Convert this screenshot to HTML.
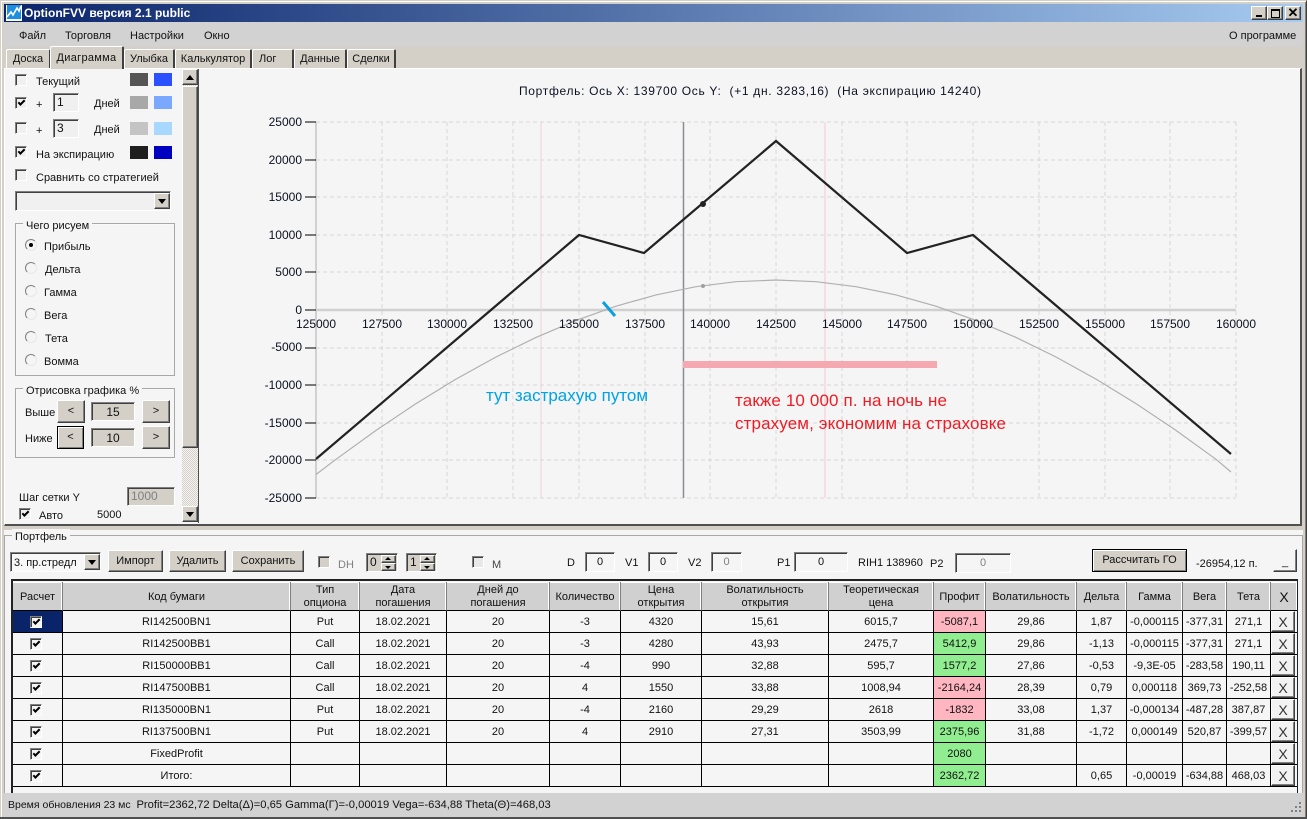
<!DOCTYPE html>
<html><head><meta charset="utf-8"><title>OptionFVV</title>
<style>
html,body{margin:0;padding:0;background:#d4d0c8}
#w{position:relative;width:1307px;height:819px;overflow:hidden;background:#d4d0c8;font:11px/16px "Liberation Sans","Noto Sans CJK SC",sans-serif;color:#111}
#w div,#w span{position:absolute;box-sizing:border-box;white-space:nowrap}
.btn{background:#d4d0c8;border:1px solid;border-color:#fff #404040 #404040 #fff;box-shadow:inset -1px -1px #808080;text-align:center}
.blk{background:#d4d0c8;border:1px solid #000;box-shadow:inset 1px 1px #fff,inset -1px -1px #808080;text-align:center}
.snk{background:#f0f0f0;border:1px solid;border-color:#808080 #fff #fff #808080;box-shadow:inset 1px 1px #404040;text-align:center}
.cb{width:12px;height:12px;background:#f0f0f0;border:1px solid;border-color:#808080 #fff #fff #808080;box-shadow:inset 1px 1px #404040,0 0 0 0 #000}
.ck::after{content:"";position:absolute;left:2px;top:2px;width:5px;height:2px;border-left:2px solid #000;border-bottom:2px solid #000;transform:rotate(-45deg)}
.r{width:12px;height:12px;border-radius:50%;background:#f5f5f5;border:1px solid;border-color:#808080 #e8e8e8 #e8e8e8 #808080}
.r.on::after{content:"";position:absolute;left:3px;top:3px;width:4px;height:4px;border-radius:50%;background:#000}
.g{border:1px solid #a8a8a8;box-shadow:inset 1px 1px #f8f8f8}
.lg{background:#f5f5f5;padding:0 3px}
.tab{background:#d4d0c8;border-top:1px solid #fff;border-left:1px solid #fff;border-right:2px solid #404040;text-align:center;border-radius:2px 2px 0 0;line-height:19px}
.arr{width:0;height:0;border-left:4px solid transparent;border-right:4px solid transparent}
table{position:absolute;left:13px;top:582px;width:1284px;table-layout:fixed;border-collapse:separate;border-spacing:0;font-size:11px;line-height:13px}
td,th{padding:2px 0 0;text-align:center;font-weight:normal;box-sizing:border-box;border-right:1px solid #000;border-bottom:1px solid #000;height:22px;background:#f5f5f5;position:relative;overflow:hidden;white-space:nowrap}
th{height:29px;background:#d0d0d0;border-right:1px solid #808080;border-bottom:1px solid #000;box-shadow:inset -1px 0 #fff,inset 0 1px #fff}
td:last-child{background:#f5f5f5;border-right:0}
.p{background:#ffb6c1}.v{background:#90ee90}.sel{background:#0a246a}
td .cb{left:17px;top:5px;background:#f5f5f5}
#w .x{left:0;top:0;width:24px;height:21px;line-height:20px;font-size:14px;background:#f2f2f2;color:#333}
</style></head><body><div id="w">
<div style="left:0;top:0;width:1307px;height:819px;border:1px solid;border-color:#d4d0c8 #404040 #404040 #d4d0c8;box-shadow:inset 1px 1px #fff,inset -1px -1px #808080"></div>
<!-- title -->
<div style="left:4px;top:4px;width:1299px;height:18px;background:linear-gradient(90deg,#0a246a,#a6caf0)"></div>
<svg style="position:absolute;left:6px;top:5px" width="16" height="16"><rect width="16" height="16" fill="#fff"/><rect x="1" y="0" width="14" height="14" fill="#1e8fe0"/><path d="M1 12L5 7 7 10 11 3 13 6 15 1" stroke="#fff" stroke-width="1.6" fill="none"/></svg>
<div style="left:24px;top:5px;color:#fff;font-weight:bold;font-size:12px;line-height:16px">OptionFVV версия 2.1 public</div>
<div class="btn" style="left:1251px;top:6px;width:16px;height:14px"><span style="left:4px;top:8px;width:6px;height:2px;background:#000"></span></div>
<div class="btn" style="left:1267px;top:6px;width:16px;height:14px"><span style="left:3px;top:2px;width:9px;height:9px;border:1px solid #000;border-top-width:2px"></span></div>
<div class="btn" style="left:1285px;top:6px;width:16px;height:14px;font-size:13px;font-weight:bold;line-height:12px;color:#000">✕</div>
<!-- menu -->
<div style="left:4px;top:22px;width:1299px;height:25px;background:#d2d2d2"></div>
<div style="left:19px;top:28px">Файл</div><div style="left:65px;top:28px">Торговля</div><div style="left:130px;top:28px">Настройки</div><div style="left:204px;top:28px">Окно</div><div style="left:1229px;top:28px">О программе</div>
<!-- tabs -->
<div class="tab" style="left:6px;top:49px;width:45px;height:19px">Доска</div>
<div class="tab" style="left:50px;top:46px;width:74px;height:23px;line-height:22px;z-index:2;letter-spacing:.3px">Диаграмма</div>
<div class="tab" style="left:124px;top:49px;width:51px;height:19px">Улыбка</div>
<div class="tab" style="left:175px;top:49px;width:77px;height:19px">Калькулятор</div>
<div class="tab" style="left:252px;top:49px;width:42px;height:19px;text-align:left;padding-left:6px">Лог</div>
<div class="tab" style="left:294px;top:49px;width:53px;height:19px">Данные</div>
<div class="tab" style="left:347px;top:49px;width:49px;height:19px">Сделки</div>
<!-- tab page -->
<div style="left:4px;top:68px;width:1298px;height:458px;background:#f5f5f5;border-top:1px solid #fff;border-left:1px solid #fff;border-right:2px solid #505050;border-bottom:2px solid #505050"></div>
<!-- left panel -->
<div class="cb" style="left:15px;top:74px"></div><div style="left:36px;top:74px">Текущий</div>
<div style="left:130px;top:73px;width:18px;height:13px;background:#555"></div><div style="left:154px;top:73px;width:18px;height:13px;background:#2b50ff"></div>
<div class="cb ck" style="left:15px;top:97px"></div><div style="left:36px;top:97px">+</div><div class="snk" style="left:53px;top:93px;width:26px;height:19px;text-align:left;padding-left:3px;line-height:17px;font-size:12px">1</div><div style="left:94px;top:96px">Дней</div>
<div style="left:130px;top:96px;width:18px;height:13px;background:#a8a8a8"></div><div style="left:154px;top:96px;width:18px;height:13px;background:#7aa8ff"></div>
<div class="cb" style="left:15px;top:122px"></div><div style="left:36px;top:123px">+</div><div class="snk" style="left:53px;top:119px;width:26px;height:19px;text-align:left;padding-left:3px;line-height:17px;font-size:12px">3</div><div style="left:94px;top:122px">Дней</div>
<div style="left:130px;top:122px;width:18px;height:13px;background:#c4c4c4"></div><div style="left:154px;top:122px;width:18px;height:13px;background:#a8d8ff"></div>
<div class="cb ck" style="left:15px;top:146px"></div><div style="left:36px;top:147px">На экспирацию</div>
<div style="left:130px;top:146px;width:18px;height:13px;background:#1e1e1e"></div><div style="left:154px;top:146px;width:18px;height:13px;background:#0000c0"></div>
<div class="cb" style="left:15px;top:169px"></div><div style="left:36px;top:170px">Сравнить со стратегией</div>
<div class="snk" style="left:15px;top:191px;width:156px;height:20px"></div>
<div class="btn" style="left:154px;top:193px;width:16px;height:16px"><span class="arr" style="left:3px;top:5px;border-top:5px solid #000"></span></div>
<div class="g" style="left:15px;top:223px;width:160px;height:153px"></div><div class="lg" style="left:23px;top:218px">Чего рисуем</div>
<div class="r on" style="left:25px;top:239px"></div><div style="left:44px;top:239px">Прибыль</div>
<div class="r" style="left:25px;top:262px"></div><div style="left:45px;top:262px">Дельта</div>
<div class="r" style="left:25px;top:285px"></div><div style="left:44px;top:285px">Гамма</div>
<div class="r" style="left:25px;top:308px"></div><div style="left:44px;top:308px">Вега</div>
<div class="r" style="left:25px;top:331px"></div><div style="left:45px;top:331px">Тета</div>
<div class="r" style="left:25px;top:354px"></div><div style="left:44px;top:354px">Вомма</div>
<div class="g" style="left:15px;top:388px;width:160px;height:70px"></div><div class="lg" style="left:23px;top:383px">Отрисовка графика %</div>
<div style="left:25px;top:405px">Выше</div><div class="btn" style="left:57px;top:400px;width:28px;height:23px;line-height:20px">&lt;</div><div class="snk" style="left:91px;top:402px;width:44px;height:19px;background:#d4d0c8;line-height:18px;font-size:12px">15</div><div class="btn" style="left:142px;top:400px;width:28px;height:23px;line-height:20px">&gt;</div>
<div style="left:25px;top:431px">Ниже</div><div class="blk" style="left:57px;top:426px;width:27px;height:23px;line-height:20px">&lt;</div><div class="snk" style="left:91px;top:428px;width:44px;height:19px;background:#d4d0c8;line-height:18px;font-size:12px">10</div><div class="btn" style="left:142px;top:426px;width:28px;height:23px;line-height:20px">&gt;</div>
<div style="left:19px;top:490px">Шаг сетки Y</div><div class="snk" style="left:127px;top:487px;width:48px;height:19px;background:#d4d0c8;color:#808080;text-align:left;padding-left:3px;line-height:17px;font-size:12px">1000</div>
<div class="cb ck" style="left:19px;top:508px"></div><div style="left:39px;top:508px">Авто</div><div style="left:97px;top:507px">5000</div>
<!-- scrollbar -->
<div style="left:182px;top:69px;width:16px;height:453px;background:repeating-conic-gradient(#d4d0c8 0 25%,#f4f4f4 0 50%) 0 0/2px 2px"></div>
<div class="btn" style="left:182px;top:69px;width:16px;height:16px"><span class="arr" style="left:3px;top:5px;border-bottom:5px solid #000"></span></div>
<div class="btn" style="left:182px;top:86px;width:16px;height:362px"></div>
<div class="btn" style="left:182px;top:506px;width:16px;height:16px"><span class="arr" style="left:3px;top:5px;border-top:5px solid #000"></span></div>
<div style="left:198px;top:69px;width:1px;height:454px;background:#505050"></div>
<!-- chart -->
<svg style="position:absolute;left:0;top:0" width="1307" height="530" font-family="Liberation Sans, sans-serif" font-size="12" fill="#0a1020">
<text x="519" y="95" textLength="462" style="white-space:pre">Портфель: Ось X: 139700 Ось Y:  (+1 дн. 3283,16)  (На экспирацию 14240)</text>
<g stroke="#d6d6d6" stroke-dasharray="4 3" fill="none">
<path d="M316 122H1236M316 160H1236M316 197H1236M316 235H1236M316 272H1236M316 348H1236M316 385H1236M316 423H1236M316 460H1236M316 498H1236"/>
<path d="M382 122V498M447 122V498M513 122V498M579 122V498M645 122V498M710 122V498M776 122V498M842 122V498M907 122V498M973 122V498M1039 122V498M1105 122V498M1170 122V498M1236 122V498"/>
</g>
<path d="M316 122V498" stroke="#d0d0d0" stroke-width="2" fill="none"/><path d="M316 310H1236" stroke="#d0d0d0" stroke-width="2.500" fill="none"/>
<path d="M305 122H316M305 160H316M305 197H316M305 235H316M305 272H316M305 310H316M305 348H316M305 385H316M305 423H316M305 460H316M305 498H316" stroke="#000"/>
<path d="M541 122V498" stroke="#eed4d8"/><path d="M825 122V498" stroke="#f9c8d0"/><path d="M683.500 122V498" stroke="#888c94" stroke-width="1.500"/>
<rect x="683" y="361" width="254" height="7" fill="#f5a8b0"/>
<path d="M316 474.500L336 459.300 376 430.400 416 403.600 456 379.100 496 357 536 337.400 576 320.400 616 306.200 656 294.900 696 286.700 736 281.700 776 280 816 281.700 856 286.700 896 294.900 936 306.200 976 320.400 1016 337.400 1056 357 1096 379.100 1136 403.600 1176 430.400 1216 459.300 1231 472" stroke="#b0b0b0" stroke-width="1.200" fill="none"/>
<circle cx="703" cy="286" r="2" fill="#a0a0a0"/>
<path d="M316 459L579 235 644 253 776 141 907 253 973 235 1231 454" stroke="#222" stroke-width="2.200" fill="none"/>
<circle cx="703" cy="204" r="3" fill="#222"/>
<path d="M603 302L615 316" stroke="#0aa0e0" stroke-width="3"/>
<g text-anchor="end"><text x="302" y="126">25000</text><text x="302" y="164">20000</text><text x="302" y="201">15000</text><text x="302" y="239">10000</text><text x="302" y="276">5000</text><text x="302" y="314">0</text><text x="302" y="351">-5000</text><text x="302" y="389">-10000</text><text x="302" y="427">-15000</text><text x="302" y="464">-20000</text><text x="302" y="502">-25000</text></g>
<g text-anchor="middle"><text x="316" y="328">125000</text><text x="382" y="328">127500</text><text x="447" y="328">130000</text><text x="513" y="328">132500</text><text x="579" y="328">135000</text><text x="645" y="328">137500</text><text x="710" y="328">140000</text><text x="776" y="328">142500</text><text x="842" y="328">145000</text><text x="907" y="328">147500</text><text x="973" y="328">150000</text><text x="1039" y="328">152500</text><text x="1105" y="328">155000</text><text x="1170" y="328">157500</text><text x="1236" y="328">160000</text></g>
<text x="486" y="401" font-size="17" fill="#00a2e8" textLength="162">тут застрахую путом</text>
<text x="735" y="406" font-size="17" fill="#ed1c24" textLength="212">также 10 000 п. на ночь не</text>
<text x="735" y="429" font-size="17" fill="#ed1c24" textLength="271">страхуем, экономим на страховке</text>
</svg>
<!-- bottom panel -->
<div style="left:4px;top:530px;width:1299px;height:264px;background:#f5f5f5"></div>
<div style="left:4px;top:535px;width:1299px;height:259px;border-top:1px solid #a8a8a8;border-left:1px solid #a8a8a8;border-right:1px solid #a8a8a8"></div>
<div class="lg" style="left:12px;top:529px">Портфель</div>
<div class="snk" style="left:10px;top:552px;width:91px;height:20px;background:#f8f8f8;text-align:left;padding-left:3px;line-height:20px">3. пр.стредл</div>
<div class="btn" style="left:84px;top:554px;width:16px;height:16px"><span class="arr" style="left:3px;top:5px;border-top:5px solid #000"></span></div>
<div class="btn" style="left:108px;top:550px;width:55px;height:22px;line-height:20px">Импорт</div>
<div class="btn" style="left:169px;top:550px;width:57px;height:22px;line-height:20px">Удалить</div>
<div class="btn" style="left:232px;top:550px;width:72px;height:22px;line-height:20px">Сохранить</div>
<div class="cb" style="left:318px;top:556px;background:#d4d0c8"></div><div style="left:338px;top:557px;color:#808080">DH</div>
<div class="snk" style="left:366px;top:553px;width:32px;height:19px;background:#d4d0c8;text-align:left;padding-left:3px;line-height:17px;font-size:12px">0</div>
<div class="btn" style="left:381px;top:555px;width:15px;height:8px"></div><div class="btn" style="left:381px;top:563px;width:15px;height:8px"></div>
<span class="arr" style="left:385px;top:557px;border-bottom:3px solid #000;border-left-width:3px;border-right-width:3px"></span><span class="arr" style="left:385px;top:566px;border-top:3px solid #000;border-left-width:3px;border-right-width:3px"></span>
<div class="snk" style="left:406px;top:553px;width:31px;height:19px;background:#d4d0c8;text-align:left;padding-left:3px;line-height:17px;font-size:12px">1</div>
<div class="btn" style="left:420px;top:555px;width:15px;height:8px"></div><div class="btn" style="left:420px;top:563px;width:15px;height:8px"></div>
<span class="arr" style="left:424px;top:557px;border-bottom:3px solid #000;border-left-width:3px;border-right-width:3px"></span><span class="arr" style="left:424px;top:566px;border-top:3px solid #000;border-left-width:3px;border-right-width:3px"></span>
<div class="cb" style="left:472px;top:556px;background:#e8e8e8"></div><div style="left:492px;top:557px;color:#444">M</div>
<div style="left:567px;top:555px">D</div><div class="snk" style="left:585px;top:552px;width:30px;height:20px;background:#f5f5f5;line-height:18px">0</div>
<div style="left:625px;top:555px">V1</div><div class="snk" style="left:648px;top:552px;width:30px;height:20px;background:#f5f5f5;line-height:18px">0</div>
<div style="left:688px;top:555px">V2</div><div class="snk" style="left:711px;top:552px;width:31px;height:20px;background:#f5f5f5;color:#808080;line-height:18px">0</div>
<div style="left:777px;top:555px">P1</div><div class="snk" style="left:794px;top:552px;width:54px;height:20px;background:#f5f5f5;line-height:18px">0</div>
<div style="left:858px;top:555px">RIH1 138960</div>
<div style="left:930px;top:556px">P2</div><div class="snk" style="left:955px;top:553px;width:56px;height:20px;background:#f5f5f5;color:#808080;line-height:18px">0</div>
<div class="blk" style="left:1092px;top:549px;width:95px;height:23px;line-height:20px">Рассчитать ГО</div>
<div style="left:1196px;top:556px">-26954,12 п.</div>
<div class="btn" style="left:1273px;top:549px;width:24px;height:23px;line-height:24px;background:#f5f5f5;border-color:#f5f5f5 #404040 #404040 #f5f5f5">_</div>
<!-- grid frame -->
<div style="left:11px;top:579px;width:1287px;height:215px;border-top:2px solid #222;border-left:2px solid #222;border-right:1px solid #222"></div>
<table>
<colgroup><col style="width:50px"><col style="width:228px"><col style="width:69px"><col style="width:87px"><col style="width:103px"><col style="width:71px"><col style="width:81px"><col style="width:127px"><col style="width:105px"><col style="width:52px"><col style="width:91px"><col style="width:50px"><col style="width:56px"><col style="width:44px"><col style="width:44px"><col style="width:26px"></colgroup>
<tr><th>Расчет</th><th>Код бумаги</th><th>Тип<br>опциона</th><th>Дата<br>погашения</th><th>Дней до<br>погашения</th><th>Количество</th><th>Цена<br>открытия</th><th>Волатильность<br>открытия</th><th>Теоретическая<br>цена</th><th>Профит</th><th>Волатильность</th><th>Дельта</th><th>Гамма</th><th>Вега</th><th>Тета</th><th style="border-right:0;font-size:14px">X</th></tr>
<tr><td class="sel"><div class="cb ck"></div></td><td>RI142500BN1</td><td>Put</td><td>18.02.2021</td><td>20</td><td>-3</td><td>4320</td><td>15,61</td><td>6015,7</td><td class="p">-5087,1</td><td>29,86</td><td>1,87</td><td>-0,000115</td><td>-377,31</td><td>271,1</td><td><div class="btn x">X</div></td></tr>
<tr><td><div class="cb ck"></div></td><td>RI142500BB1</td><td>Call</td><td>18.02.2021</td><td>20</td><td>-3</td><td>4280</td><td>43,93</td><td>2475,7</td><td class="v">5412,9</td><td>29,86</td><td>-1,13</td><td>-0,000115</td><td>-377,31</td><td>271,1</td><td><div class="btn x">X</div></td></tr>
<tr><td><div class="cb ck"></div></td><td>RI150000BB1</td><td>Call</td><td>18.02.2021</td><td>20</td><td>-4</td><td>990</td><td>32,88</td><td>595,7</td><td class="v">1577,2</td><td>27,86</td><td>-0,53</td><td>-9,3E-05</td><td>-283,58</td><td>190,11</td><td><div class="btn x">X</div></td></tr>
<tr><td><div class="cb ck"></div></td><td>RI147500BB1</td><td>Call</td><td>18.02.2021</td><td>20</td><td>4</td><td>1550</td><td>33,88</td><td>1008,94</td><td class="p">-2164,24</td><td>28,39</td><td>0,79</td><td>0,000118</td><td>369,73</td><td>-252,58</td><td><div class="btn x">X</div></td></tr>
<tr><td><div class="cb ck"></div></td><td>RI135000BN1</td><td>Put</td><td>18.02.2021</td><td>20</td><td>-4</td><td>2160</td><td>29,29</td><td>2618</td><td class="p">-1832</td><td>33,08</td><td>1,37</td><td>-0,000134</td><td>-487,28</td><td>387,87</td><td><div class="btn x">X</div></td></tr>
<tr><td><div class="cb ck"></div></td><td>RI137500BN1</td><td>Put</td><td>18.02.2021</td><td>20</td><td>4</td><td>2910</td><td>27,31</td><td>3503,99</td><td class="v">2375,96</td><td>31,88</td><td>-1,72</td><td>0,000149</td><td>520,87</td><td>-399,57</td><td><div class="btn x">X</div></td></tr>
<tr><td><div class="cb ck"></div></td><td>FixedProfit</td><td></td><td></td><td></td><td></td><td></td><td></td><td></td><td class="v">2080</td><td></td><td></td><td></td><td></td><td></td><td><div class="btn x">X</div></td></tr>
<tr><td><div class="cb ck"></div></td><td>Итого:</td><td></td><td></td><td></td><td></td><td></td><td></td><td></td><td class="v">2362,72</td><td></td><td>0,65</td><td>-0,00019</td><td>-634,88</td><td>468,03</td><td><div class="btn x">X</div></td></tr>
</table>
<!-- status -->
<div style="left:4px;top:793px;width:1299px;height:24px;background:#d2d2d2"></div>
<div style="left:8px;top:797px;font-size:10.500px">Время обновления 23 мс&nbsp; <b style="font-weight:normal;font-size:11.200px">Profit=2362,72 Delta(Δ)=0,65 Gamma(Γ)=-0,00019 Vega=-634,88 Theta(Θ)=468,03</b></div>
<svg style="position:absolute;left:1289px;top:801px" width="13" height="13" fill="#808080"><rect x="10" y="1" width="2" height="2"/><rect x="10" y="5" width="2" height="2"/><rect x="6" y="5" width="2" height="2"/><rect x="10" y="9" width="2" height="2"/><rect x="6" y="9" width="2" height="2"/><rect x="2" y="9" width="2" height="2"/></svg>
<div style="left:0;top:817px;width:1307px;height:2px;background:#505050"></div>
</div></body></html>
